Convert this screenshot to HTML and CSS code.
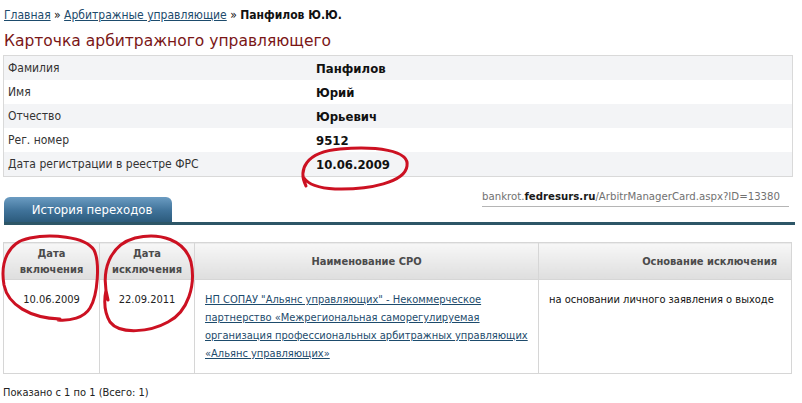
FILE: index.html
```html
<!DOCTYPE html>
<html>
<head>
  <title>Карточка арбитражного управляющего</title>
  <meta name="viewport" content="width=device-width, initial-scale=1.0">
  <link rel="stylesheet" href="styles.css">
</head>
<body>
  <div class="breadcrumbs">
    <a href="#">Главная</a> &raquo; <a href="#">Арбитражные управляющие</a> &raquo; <b>Панфилов Ю.Ю.</b>
  </div>

  <h1 class="card-title">Карточка арбитражного управляющего</h1>

  <table class="info">
    <tr><td class="label">Фамилия</td><td class="value">Панфилов</td></tr>
    <tr><td class="label">Имя</td><td class="value">Юрий</td></tr>
    <tr><td class="label">Отчество</td><td class="value">Юрьевич</td></tr>
    <tr><td class="label">Рег. номер</td><td class="value">9512</td></tr>
    <tr><td class="label">Дата регистрации в реестре ФРС</td><td class="value">10.06.2009</td></tr>
  </table>

  <div class="tabs-bar">
    <div class="tab">История переходов</div>
    <div class="url">bankrot.<b>fedresurs.ru</b>/ArbitrManagerCard.aspx?ID=13380</div>
  </div>

  <table class="history">
    <thead>
      <tr>
        <th class="col-in">Дата<br>включения</th>
        <th class="col-out">Дата<br>исключения</th>
        <th class="col-sro">Наименование СРО</th>
        <th class="col-reason">Основание исключения</th>
      </tr>
    </thead>
    <tbody>
      <tr>
        <td class="date">10.06.2009</td>
        <td class="date">22.09.2011</td>
        <td class="sro"><a href="#">НП СОПАУ "Альянс управляющих" - Некоммерческое партнерство «Межрегиональная саморегулируемая организация профессиональных арбитражных управляющих «Альянс управляющих»</a></td>
        <td class="reason">на основании личного заявления о выходе</td>
      </tr>
    </tbody>
  </table>

  <div class="pager">Показано с 1 по 1 (Всего: 1)</div>

  <!-- red marker circles drawn over the screenshot -->
  <svg class="marks" width="802" height="403" viewBox="0 0 802 403">
    <path d="M306 186 C298 170 305 152 340 149 C375 146 410 150 407 166 C405 182 370 190 335 189 C318 188 308 184 304 178"/>
    <path d="M60 319 C30 318 8 305 4 285 C0 262 8 242 30 238 C50 234 85 236 94 250 C100 262 98 295 90 308 C84 318 70 321 58 320"/>
    <path d="M108 300 C100 270 110 245 135 238 C160 232 185 240 191 262 C196 285 188 312 168 322 C150 332 120 335 110 322 C104 312 104 300 106 290"/>
  </svg>
</body>
</html>
```

FILE: styles.css
```css
body {
  margin: 0;
  padding: 0;
  background: #fff;
  color: #222;
  font-family: "DejaVu Sans Condensed", "Liberation Sans", sans-serif;
  font-size: 11px;
  position: relative;
  width: 802px;
  height: 403px;
  overflow: hidden;
}

a {
  color: #1d4b6c;
}

.breadcrumbs {
  padding: 7px 4px 0;
  font-size: 12px;
  line-height: 16px;
  color: #111;
}

.card-title {
  margin: 8px 0 0 4px;
  font-family: "DejaVu Sans", sans-serif;
  font-weight: normal;
  font-size: 15.5px;
  line-height: 20px;
  color: #7a1616;
}

.info {
  margin: 4px 0 0 3px;
  width: 790px;
  border-collapse: collapse;
  border: 1px solid #d9d9d9;
  font-size: 12px;
}

.info td {
  height: 24px;
  padding: 0 4px;
}

.info tr:nth-child(odd) {
  background: #f3f4f6;
}

.info .label {
  width: 300px;
  color: #333;
}

.info .value {
  font-weight: bold;
  font-size: 13px;
  color: #111;
}

.tabs-bar {
  display: flex;
  justify-content: space-between;
  margin: 10px 7px 0 4px;
  border-bottom: 3px solid #2d5667;
}

.tab {
  margin-top: 10px;
  width: 168px;
  height: 25px;
  line-height: 25px;
  text-align: center;
  padding-left: 8px;
  box-sizing: border-box;
  color: #fff;
  font-size: 13px;
  border-radius: 6px 6px 0 0;
  background: linear-gradient(#6b9cc2, #3f7299 55%, #2c5b7c);
}

.url {
  align-self: flex-start;
  margin-right: 6px;
  padding: 2px 9px 2px 0;
  font-size: 11.3px;
  line-height: 15px;
  color: #717171;
  border-bottom: 1px solid #b5b5b5;
}

.url b {
  font-weight: 600;
  color: #1a1a1a;
}

.history {
  margin: 17px 0 0 3px;
  border-collapse: collapse;
  width: 789px;
  border: 1px solid #d6d6d6;
}

.history th {
  height: 37px;
  padding: 2px 4px 1px;
  box-sizing: border-box;
  line-height: 16px;
  color: #4b4b4b;
  font-weight: bold;
  border: 1px solid #d6d6d6;
  background: linear-gradient(#f7f7f7, #dedede);
}

.history .col-in { width: 96px; }
.history .col-out { width: 95px; }
.history .col-sro { width: 344px; }
.history .col-reason {
  text-align: right;
  padding-right: 14px;
}

.history td {
  vertical-align: top;
  height: 93px;
  box-sizing: border-box;
  padding: 11px 10px 10px;
  line-height: 18px;
  border: 1px solid #d6d6d6;
}

.history .date {
  text-align: center;
}

.history .reason {
  color: #111;
}

.pager {
  margin: 11px 0 0 3px;
  line-height: 16px;
  color: #222;
}

.marks {
  position: absolute;
  left: 0;
  top: 0;
  pointer-events: none;
}

.marks path {
  fill: none;
  stroke: #cc1122;
  stroke-width: 3;
  stroke-linecap: round;
}
```
